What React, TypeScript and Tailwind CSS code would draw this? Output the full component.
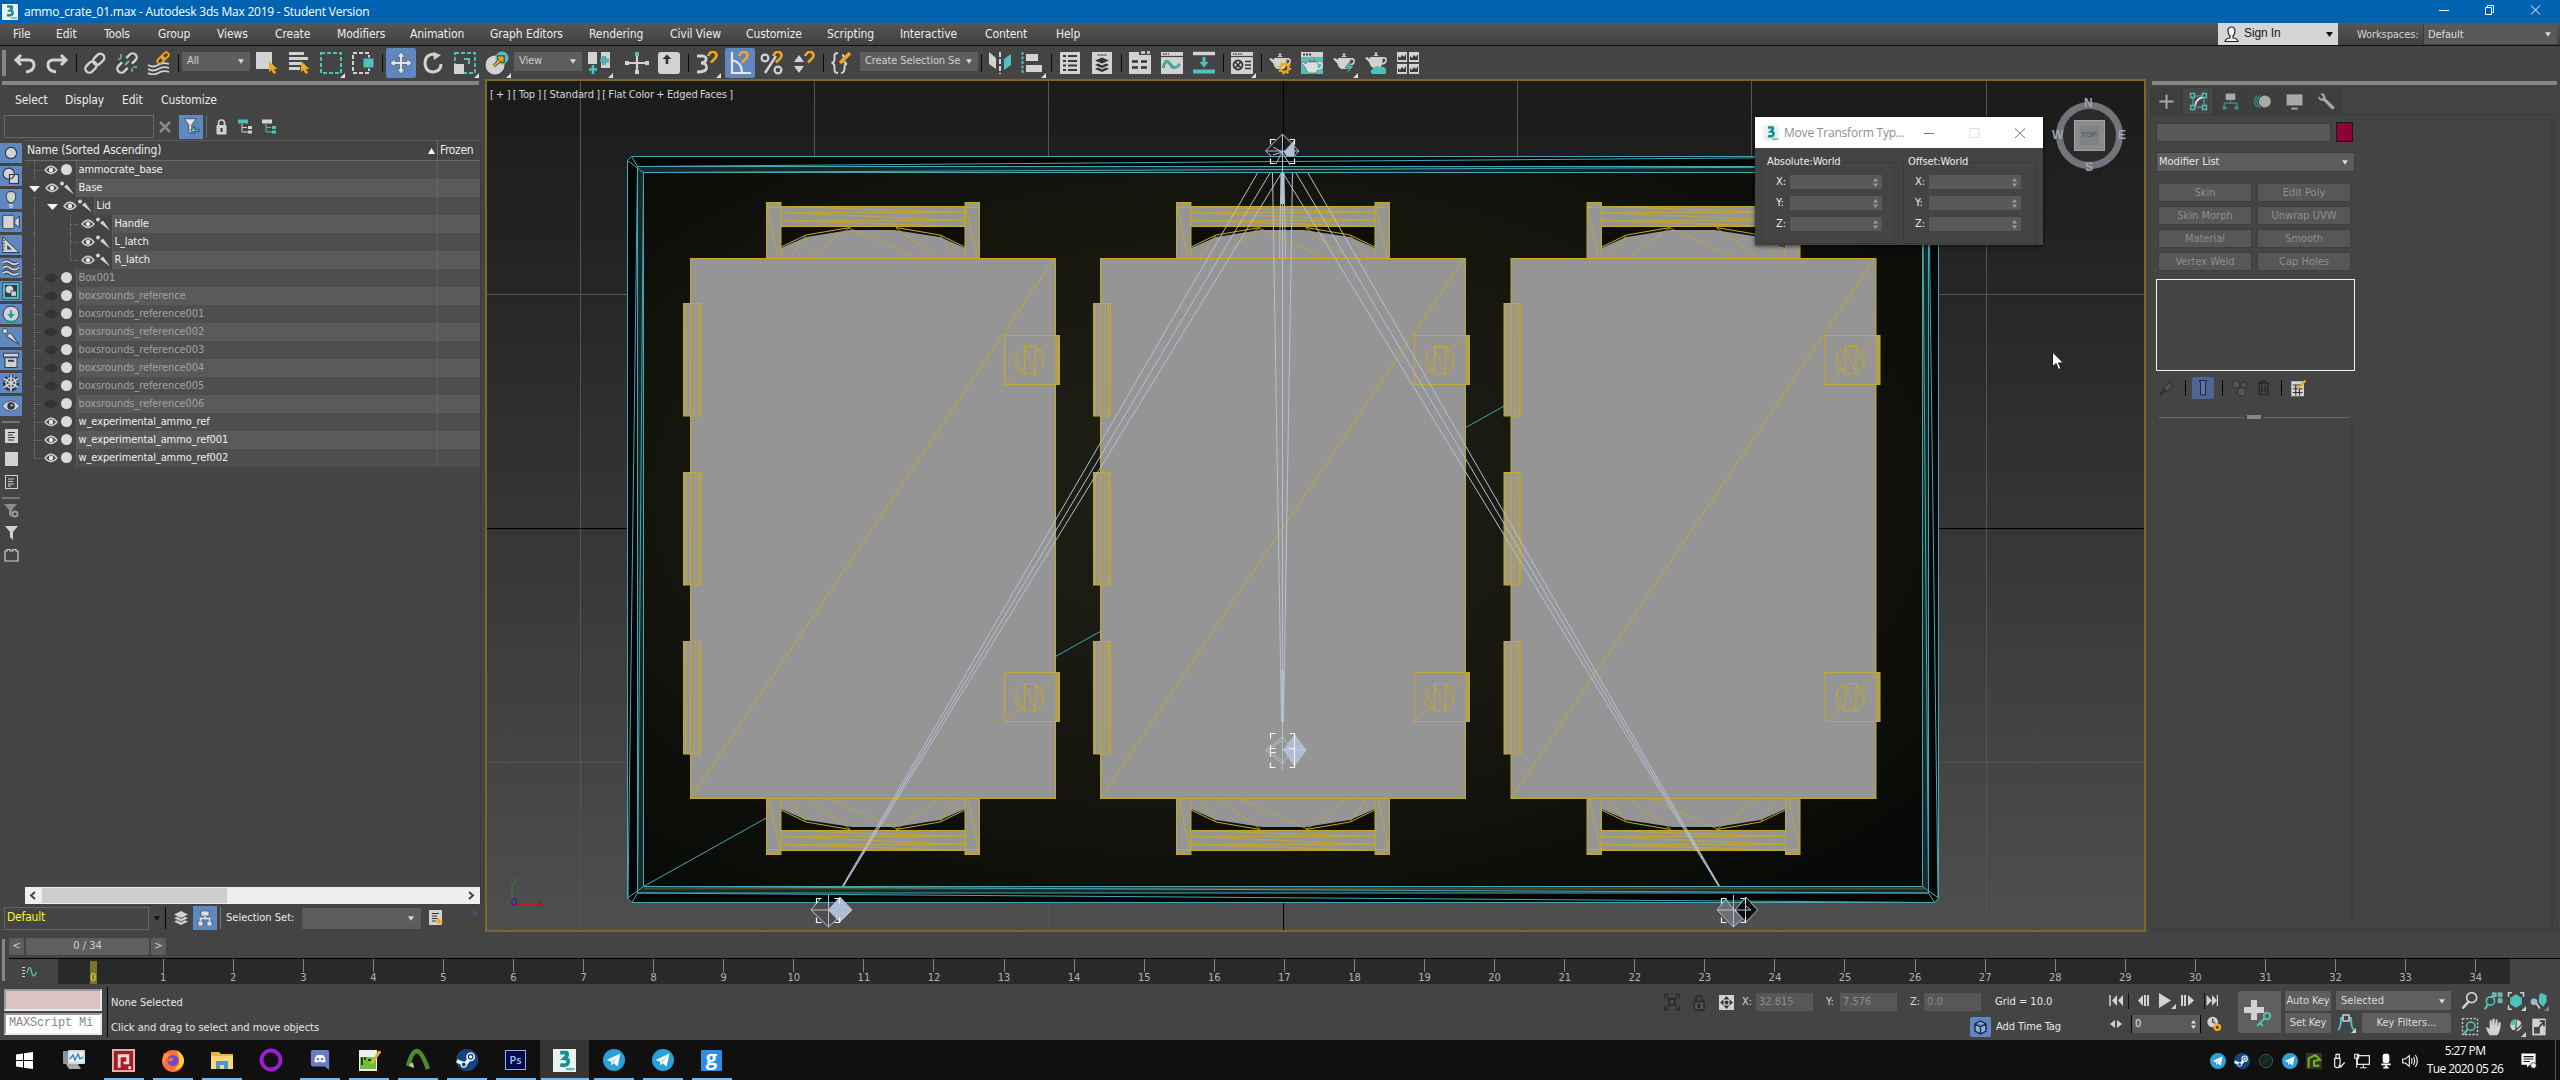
import React from 'react';

const L = '#d2d2d2';
const T = '#4fc0ba';
const O = '#f2a71e';
const Y = '#c3a92e';
const C = '#46a6b6';
const W = '#b6bfd2';

type SvgProps = { s?: number; h?: number; vb?: string; children: React.ReactNode };

function Ic({ s = 24, h, vb = '0 0 24 24', children }: SvgProps) {
  return (
    <svg width={s} height={h ?? s} viewBox={vb} fill="none" className="block shrink-0">
      {children}
    </svg>
  );
}

/* ---------- toolbar ---------- */

function Cell({ children, active = false, fly = false }: { children: React.ReactNode; active?: boolean; fly?: boolean }) {
  return (
    <div className={`relative flex h-[30px] w-8 shrink-0 items-center justify-center rounded-[3px] ${active ? 'bg-[#5f88c0] bg-clip-content px-px' : ''}`}>
      {children}
      {fly && (
        <svg width="5" height="5" viewBox="0 0 5 5" className="absolute right-[2px] bottom-0">
          <path d="M5 0V5H0z" fill="#e0e0e0" />
        </svg>
      )}
    </div>
  );
}

function Sep() {
  return (
    <div className="flex h-[18px] w-[6px] shrink-0 justify-center pl-px">
      <div className="w-px bg-[#0c0c0c]" />
    </div>
  );
}

function Caret({ color = '#d8d8d8', w = 7 }: { color?: string; w?: number }) {
  return (
    <svg width={w} height="5" viewBox="0 0 7 5" className="shrink-0">
      <path d="M0 0H7L3.500 5z" fill={color} />
    </svg>
  );
}

function Drop({ label, className }: { label: string; className: string }) {
  return (
    <div className={`flex h-[19px] shrink-0 items-center justify-between bg-[#5e5e5e] pr-[6px] pl-[5px] text-[11px] text-[#cfcfcf] ${className}`}>
      <span className="tracking-[-0.1px] whitespace-nowrap">{label}</span>
      <Caret w={6} />
    </div>
  );
}

function Dots({ className }: { className: string }) {
  return <div className={`shrink-0 bg-[radial-gradient(#8b8b8b_0.7px,transparent_0.8px)] bg-[length:2px_2px] ${className}`} />;
}

const Magnet = ({ x = 13, y = 1 }: { x?: number; y?: number }) => (
  <path d={`M${x} ${y + 4}q3 -6 7 -3.500q3.500 3 -1 7l-3 3`} stroke={O} strokeWidth="2.600" />
);

const Teapot = ({ dy = 0, fill = L }: { dy?: number; fill?: string }) => (
  <g transform={`translate(0 ${dy})`}>
    <path d="M6 7H18Q20 13 16 18H9Q6 16 5 12L1 8L3 7L6 9z" fill={fill} />
    <path d="M18 8Q23 7 22 11Q21 14 17 14" stroke={fill} strokeWidth="1.700" />
    <path d="M9 6Q12 3 15 6z" fill={fill} />
    <circle cx="12" cy="3.500" r="1.300" fill={fill} />
  </g>
);

const Pointer = ({ x, y }: { x: number; y: number }) => (
  <path d={`M${x} ${y}v11l2.500 -2l2 4l2.500 -1l-2 -4h3.500z`} fill={O} />
);

function Toolbar() {
  return (
    <div className="flex h-[33px] items-center bg-[#444444] pt-px">
      <Dots className="ml-[2px] h-[26px] w-[4px]" />
      <div className="w-[3px]" />
      <Cell><Ic><path d="M8 4L3 9L8 14M3 9H16Q21 9 21 14Q21 20 13 21" stroke={L} strokeWidth="3" /></Ic></Cell>
      <Cell><Ic><path d="M16 4L21 9L16 14M21 9H8Q3 9 3 14Q3 20 11 21" stroke={L} strokeWidth="3" /></Ic></Cell>
      <Sep />
      <Cell>
        <Ic><g transform="rotate(-45 12 12)" stroke={L} strokeWidth="2.400"><rect x="0" y="8" width="12.500" height="8" rx="4" /><rect x="11" y="8" width="12.500" height="8" rx="4" /></g></Ic>
      </Cell>
      <Cell>
        <Ic>
          <g transform="rotate(-45 12 12)" strokeWidth="2.400" stroke={L}><path d="M9 8H4a4 4 0 0 0 0 8H9M15 8H20a4 4 0 0 1 0 8H15" /></g>
          <path d="M6 3V7M3 8H6M17 17V21M18 16H22" stroke={T} strokeWidth="1.600" /><path d="M14 10L10 14" stroke={T} strokeWidth="2" />
        </Ic>
      </Cell>
      <Cell>
        <Ic>
          <path d="M1 14q5 3 10 0t11 -1M1 18q5 3 10 0t11 -1M1 22q5 3 10 0t11 -1" stroke={L} strokeWidth="1.800" />
          <g transform="rotate(-45 16 7)" stroke={O} strokeWidth="1.800"><rect x="9" y="4.500" width="8" height="5" rx="2.500" /><rect x="15" y="4.500" width="8" height="5" rx="2.500" /></g>
        </Ic>
      </Cell>
      <Sep />
      <div className="w-px" />
      <Drop label="All" className="mb-1 w-[68px]" />
      <div className="w-px" />
      <Cell><Ic><rect x="1" y="1" width="16" height="17" fill={L} /><Pointer x={14} y={10} /></Ic></Cell>
      <Cell><Ic><path d="M2 2.500H17M2 7.500H21M2 12.500H15M2 17.500H13" stroke={L} strokeWidth="2.800" /><Pointer x={14} y={10} /></Ic></Cell>
      <Cell fly><Ic><rect x="2" y="2" width="20" height="20" stroke={T} strokeWidth="2" strokeDasharray="4 2" /></Ic></Cell>
      <Cell><Ic><rect x="2" y="2" width="16" height="20" stroke={L} strokeWidth="2" strokeDasharray="4 2" /><rect x="12" y="7" width="11" height="10" fill={T} stroke="#444" /></Ic></Cell>
      <Sep />
      <Cell active>
        <Ic><path d="M12 1L16 6H13.500V10.500H18V8L23 12L18 16V13.500H13.500V18H16L12 23L8 18H10.500V13.500H6V16L1 12L6 8V10.500H10.500V6H8z" fill="#e4e4e4" stroke="#39465a" strokeWidth="0.600" /></Ic>
      </Cell>
      <Cell><Ic><path d="M15 3.500Q4 2 4 13Q5 21 12 21Q20 20 20 13" stroke={L} strokeWidth="3" /><path d="M12 1L20 4L13 9z" fill={L} /></Ic></Cell>
      <Cell fly>
        <Ic><rect x="2" y="2" width="20" height="20" stroke={T} strokeWidth="1.800" strokeDasharray="4 2" /><rect x="1" y="13" width="10" height="10" fill={L} /><path d="M11 8H16V13" stroke={T} strokeWidth="2" /></Ic>
      </Cell>
      <Cell fly><Ic><circle cx="10" cy="14" r="9.500" fill={L} /><circle cx="17" cy="7" r="6.500" fill={T} /><path d="M9 15L17 7M12 6H18V12" stroke="#444" strokeWidth="3.600" /><path d="M9 15L17 7M13 6.500H17.500V11" stroke={O} strokeWidth="2" /></Ic></Cell>
      <div className="w-px" />
      <Drop label="View" className="mb-1 w-[68px]" />
      <div className="w-px" />
      <Cell fly>
        <Ic><rect x="1" y="1" width="9" height="12" fill={L} /><rect x="14" y="1" width="9" height="16" fill={L} /><path d="M6 14V23M2 18.500H10M17 5V14M13 9.500H22" stroke="#3c7f7c" strokeWidth="3.500" /><path d="M6 14V23M2 18.500H10M17 5V14M13 9.500H22" stroke={T} strokeWidth="2" /></Ic>
      </Cell>
      <div className="w-[6px]" />
      <Cell><Ic><path d="M12 5V22M1 12H22" stroke={L} strokeWidth="2.200" /><rect x="10" y="1" width="4" height="4" fill={T} /><rect x="10" y="19" width="4" height="4" fill={L} /><rect x="0" y="10" width="4" height="4" fill={L} /><rect x="20" y="10" width="4" height="4" fill={L} /></Ic></Cell>
      <Cell><Ic><rect x="1" y="1" width="22" height="22" rx="3" fill={L} /><path d="M10 13V7" stroke="#333" strokeWidth="2.600" /><path d="M5.500 8L10 3.500L14.500 8z" fill="#333" /></Ic></Cell>
      <Sep />
      <Cell fly><Ic><path d="M2 5H8Q12 6 11 9Q10 12 6 12Q12 12 11.500 17Q11 21 2 21" stroke={L} strokeWidth="2.800" /><Magnet /></Ic></Cell>
      <div className="w-px" />
      <Cell active><Ic><path d="M4 1V22H23M4 9Q14 11 14 22" stroke="#e8e8e8" strokeWidth="2.200" /><Magnet x={11} /></Ic></Cell>
      <Cell><Ic><circle cx="5" cy="7" r="3.400" stroke={L} strokeWidth="2.200" /><circle cx="18" cy="19" r="3.400" stroke={L} strokeWidth="2.200" /><path d="M5 22L16 5" stroke={L} strokeWidth="2.400" /><Magnet /></Ic></Cell>
      <Cell><Ic><path d="M2 11L7 4L12 11zM2 15H12L7 22z" fill={L} /><Magnet /></Ic></Cell>
      <Sep />
      <Cell><Ic><path d="M8 2Q4 2 4.500 6Q5 12 1.500 12Q5 12 4.500 18Q4 22 8 22M12 4Q15 5 14 9Q14 12 17 13Q14 13 14.500 18Q14 22 11 22" stroke={L} strokeWidth="2" /><path d="M10 12L20 2" stroke={O} strokeWidth="3.500" /></Ic></Cell>
      <div className="w-[2px]" />
      <Drop label="Create Selection Se" className="mb-1 w-[118px]" />
      <Sep />
      <Cell><Ic><path d="M1 1L8 7V18L1 13z" fill={L} /><path d="M12 1V23" stroke={L} strokeWidth="2" strokeDasharray="5 2" /><path d="M23 3L16 8V19L23 14z" fill={T} /></Ic></Cell>
      <Cell fly><Ic><path d="M2.500 1V23" stroke={T} strokeWidth="2" strokeDasharray="3 1.500" /><rect x="6" y="3" width="12" height="7" fill={L} /><rect x="6" y="14" width="16" height="7" fill={L} /></Ic></Cell>
      <Sep />
      <Cell><Ic><rect x="2" y="1" width="20" height="22" fill={L} /><path d="M5 5H8M5 10H8M5 14.500H8M5 19H8M10 5H19M10 10H19M10 14.500H19M10 19H19" stroke="#383838" strokeWidth="2" /></Ic></Cell>
      <Cell><Ic><rect x="2" y="1" width="20" height="22" fill={L} /><path d="M7 4H17" stroke="#777" strokeWidth="1.500" /><path d="M5 9.500L12 6.500L19 9.500L12 12.500zM5 14L8 12.500L12 14.500L16 12.500L19 14L12 17zM5 18L8 16.500L12 18.500L16 16.500L19 18L12 21z" fill="#333" /></Ic></Cell>
      <Sep />
      <Cell><Ic><path d="M1 1H11V4H23V23H1z" fill={L} /><path d="M13 1.500H17M19 1.500H22" stroke={L} strokeWidth="2.500" /><path d="M4 10.500H10M4 16.500H10M13 10.500H19M13 16.500H19" stroke="#333" strokeWidth="2.400" /></Ic></Cell>
      <Cell><Ic><rect x="1" y="1" width="22" height="22" fill={L} /><path d="M1 5.500H23" stroke="#444" strokeWidth="1.200" /><path d="M3 3H9" stroke="#444" strokeWidth="1.500" strokeDasharray="1.500 1" /><path d="M3 17Q6 6 10 13T20 13" stroke="#2c7f7c" strokeWidth="2.600" /><path d="M3 17Q6 6 10 13T20 13" stroke={T} strokeWidth="1.200" /></Ic></Cell>
      <Cell><Ic><path d="M1 2.500H23" stroke={L} strokeWidth="3.500" /><path d="M1 20.500H23" stroke={T} strokeWidth="4" /><path d="M12 6V12" stroke={T} strokeWidth="3" /><path d="M7.500 11H16.500L12 16.500z" fill={T} /></Ic></Cell>
      <Sep />
      <Cell fly><Ic><rect x="1" y="1" width="22" height="22" fill={L} /><path d="M1 5.500H23" stroke="#444" strokeWidth="1.200" /><path d="M3 3H12" stroke="#444" strokeWidth="1.500" strokeDasharray="1.500 1" /><circle cx="8" cy="14" r="4.500" stroke="#333" strokeWidth="1.800" /><path d="M5 11L11 17M11 11L5 17M15 10.500H21M15 14H21M15 17.500H21" stroke="#333" strokeWidth="1.600" /></Ic></Cell>
      <Sep />
      <Cell><Ic><Teapot /><circle cx="16.500" cy="17" r="4" stroke={O} strokeWidth="2.600" /><circle cx="16.500" cy="17" r="5.800" stroke={O} strokeWidth="1.600" strokeDasharray="2 2.500" /></Ic></Cell>
      <Cell><Ic><rect x="1" y="1" width="22" height="22" fill={T} /><rect x="1" y="1" width="22" height="5" fill={L} /><path d="M3 3.500H12" stroke="#444" strokeWidth="1.800" strokeDasharray="2 1" /><g stroke="#2d6562" strokeWidth="0.600"><Teapot dy={4} fill="#dedede" /></g></Ic></Cell>
      <Cell fly><Ic><Teapot /><path d="M19 9L13 17H17L14 23L22 15H18z" fill={T} stroke="#444" strokeWidth="0.600" /></Ic></Cell>
      <Cell><Ic><Teapot dy={-1} /><path d="M8 23Q5 19 9 18Q11 13 16 16Q22 15 22 20Q23 23 20 23z" fill={T} /></Ic></Cell>
      <Cell>
        <Ic>
          {[[1, 1], [13, 1], [1, 13], [13, 13]].map(([x, y]) => (
            <g key={`${x}-${y}`}><rect x={x} y={y} width="10" height="10" fill={L} /><path d={`M${x + 1} ${y + 8}v-4l2 2l2 -3l2 2l2 -3v6z`} fill="#3a3a3a" /></g>
          ))}
        </Ic>
      </Cell>
    </div>
  );
}

/* ---------- title and menu bars ---------- */

function AppMark({ s }: { s: number }) {
  return (
    <Ic s={s} vb="0 0 16 16">
      <rect width="16" height="16" fill="#e6f3f2" />
      <path d="M5 2.500H9.500Q11 4 8 6.500Q12 7 10 10.500Q8 12 5 11" stroke="#168f94" strokeWidth="2.600" />
      <path d="M9 14H15" stroke="#66b7b5" strokeWidth="1.600" />
    </Ic>
  );
}

function TitleBar() {
  return (
    <div className="flex h-[23px] items-center bg-[#0063b1] pl-[2px] font-['Open_Sans','Noto_Sans',sans-serif] text-[12px] text-white">
      <AppMark s={16} />
      <span className="ml-[6px] tracking-[-0.22px] whitespace-nowrap">ammo_crate_01.max - Autodesk 3ds Max 2019 - Student Version</span>
      <svg width="106" height="12" viewBox="0 0 106 12" fill="none" stroke="#fff" className="mr-[16px] mb-[3px] ml-auto">
        <path d="M1 6.500H11" /><path d="M47.500 3.500H53.500V10.500H47.500zM49.500 3.500V1.500H55.500V8.500H53.500" /><path d="M93 1.500L102 10.500M102 1.500L93 10.500" />
      </svg>
    </div>
  );
}

function MenuBar() {
  return (
    <div className="flex h-[23px] items-center border-b border-[#111] bg-linear-to-b from-[#565656] to-[#404040] pl-[13px] text-[12px] tracking-[-0.1px] text-[#ececec]">
      <div className="flex pt-[2px]">
        <span className="w-[43px]">File</span>
        <span className="w-[48px]">Edit</span>
        <span className="w-[54px]">Tools</span>
        <span className="w-[59px]">Group</span>
        <span className="w-[58px]">Views</span>
        <span className="w-[62px]">Create</span>
        <span className="w-[73px]">Modifiers</span>
        <span className="w-[80px]">Animation</span>
        <span className="w-[99px]">Graph Editors</span>
        <span className="w-[81px]">Rendering</span>
        <span className="w-[76px]">Civil View</span>
        <span className="w-[81px]">Customize</span>
        <span className="w-[73px]">Scripting</span>
        <span className="w-[85px]">Interactive</span>
        <span className="w-[71px]">Content</span>
        <span>Help</span>
      </div>
      <div className="ml-auto flex h-[22px] w-[120px] items-center bg-[#d5d5d5] pr-1 pl-[6px] font-['Liberation_Sans',sans-serif] text-[12px] text-[#16161c]">
        <Ic s={15} h={17} vb="0 0 15 17"><path d="M7.500 1Q11 1 11 5Q11 8 9 10V12Q13 12 14 15.500H1Q2 12 6 12V10Q4 8 4 5Q4 1 7.500 1z" fill="#f3f3f3" stroke="#223" strokeWidth="1.200" /></Ic>
        <span className="ml-[5px]">Sign In</span>
        <div className="ml-auto"><Caret color="#111" w={9} /></div>
      </div>
      <span className="ml-[19px] w-[66px] pt-[3px] text-[11px] text-[#d4d4d4]">Workspaces:</span>
      <div className="mr-[3px] flex h-[20px] w-[134px] items-center justify-between border-l border-[#383838] bg-[#595959] pr-[6px] pl-1 text-[11px] text-[#dcdcdc]">
        <span className="pt-[2px]">Default</span> <Caret w={6} />
      </div>
    </div>
  );
}

/* ---------- scene explorer ---------- */

type Node = { name: string; depth: number; kind: 'geo' | 'bone'; hidden?: boolean; open?: boolean };

const nodes: Node[] = [
  { name: 'ammocrate_base', depth: 0, kind: 'geo' },
  { name: 'Base', depth: 0, kind: 'bone', open: true },
  { name: 'Lid', depth: 1, kind: 'bone', open: true },
  { name: 'Handle', depth: 2, kind: 'bone' },
  { name: 'L_latch', depth: 2, kind: 'bone' },
  { name: 'R_latch', depth: 2, kind: 'bone' },
  { name: 'Box001', depth: 0, kind: 'geo', hidden: true },
  { name: 'boxsrounds_reference', depth: 0, kind: 'geo', hidden: true },
  { name: 'boxsrounds_reference001', depth: 0, kind: 'geo', hidden: true },
  { name: 'boxsrounds_reference002', depth: 0, kind: 'geo', hidden: true },
  { name: 'boxsrounds_reference003', depth: 0, kind: 'geo', hidden: true },
  { name: 'boxsrounds_reference004', depth: 0, kind: 'geo', hidden: true },
  { name: 'boxsrounds_reference005', depth: 0, kind: 'geo', hidden: true },
  { name: 'boxsrounds_reference006', depth: 0, kind: 'geo', hidden: true },
  { name: 'w_experimental_ammo_ref', depth: 0, kind: 'geo' },
  { name: 'w_experimental_ammo_ref001', depth: 0, kind: 'geo' },
  { name: 'w_experimental_ammo_ref002', depth: 0, kind: 'geo' },
];

const indent = ['w-[51px]', 'w-[69px]', 'w-[87px]'];

function TreeRow({ n, i }: { n: Node; i: number }) {
  const last = i === nodes.length - 1;
  return (
    <div className="flex h-[18px]">
      <div className={`flex shrink-0 items-center justify-end pr-[4px] ${indent[n.depth]}`}>
        <div className="flex h-full flex-1 justify-start pl-[9px]">
          <div className={`w-0 border-l border-dotted border-[#777] ${last ? 'h-[9px]' : 'h-full'} ${n.open && n.depth === 0 ? 'border-transparent' : ''}`} />
          {n.depth === 2 && <div className={`ml-[35px] w-0 border-l border-dotted border-[#777] ${n.name === 'R_latch' ? 'h-[9px]' : 'h-full'}`} />}
          {!n.open && <div className="mt-[9px] h-0 w-[7px] border-t border-dotted border-[#777]" />}
        </div>
        {n.open && (
          <svg width="11" height="6" viewBox="0 0 11 6" className="mt-px mr-[5px] shrink-0"><path d="M0 0H11L5.500 6z" fill="#f4f4f4" /></svg>
        )}
        <Ic s={14} h={10} vb="0 0 14 10">
          {n.hidden ? (
            <path d="M0 5Q7 -4 14 5Q7 14 0 5z" fill="#333333" />
          ) : (
            <g><path d="M1 5Q7 -2.500 13 5Q7 12 1 5z" stroke="#cfcfcf" strokeWidth="1.300" /><circle cx="7" cy="5" r="2.200" fill="#e6e6e6" /></g>
          )}
        </Ic>
        {n.kind === 'geo' ? (
          <div className="mb-px ml-[3px] size-[11px] shrink-0 rounded-full bg-[#dadada]" />
        ) : (
          <div className="-mr-[2px] ml-px"><Ic s={14} h={14} vb="0 0 14 14"><circle cx="2" cy="2.500" r="2" fill={L} /><path d="M4 6L7 3.500L14 13.500z" fill={L} /></Ic></div>
        )}
      </div>
      <div className={`flex flex-1 items-center border-l border-[#5c5c5c] pt-px pl-[1.500px] tracking-[-0.1px] ${i % 2 ? 'bg-[#5a5a5a]' : 'bg-[#4e4e4e]'} ${n.hidden ? 'text-[#a2a2a2]' : 'text-[#f0f0f0]'}`}>
        {n.name}
      </div>
      <div className={`w-[43px] border-l ${i % 2 ? 'border-[#656565] bg-[#5a5a5a]' : 'border-[#5c5c5c] bg-[#4e4e4e]'}`} />
    </div>
  );
}

function Tile({ children }: { children: React.ReactNode }) {
  return (
    <div className="mb-[3px] flex h-[20px] w-[22px] items-center justify-center bg-[#5f88c0]">
      <Ic s={18}>{children}</Ic>
    </div>
  );
}

const K = '#2e3a4c';

function SideTiles() {
  return (
    <div className="flex w-[25px] shrink-0 flex-col pt-[3px]">
      <Tile><circle cx="12" cy="12" r="7.500" fill={L} stroke={K} strokeWidth="1.500" /></Tile>
      <Tile><circle cx="9" cy="9" r="7.500" fill={L} stroke={K} strokeWidth="1.500" /><rect x="10" y="10" width="12" height="12" fill={L} stroke={K} strokeWidth="1.500" /><path d="M10 16A7.500 7.500 0 0 0 16.500 10" stroke={K} strokeWidth="1.500" /></Tile>
      <Tile><path d="M9 17Q9 15 6 12Q4 2 12 2Q20 2 18 12Q15 15 15 17z" fill={L} stroke={K} strokeWidth="1.300" /><path d="M9 20H15M10 22.500H14" stroke={L} strokeWidth="2" /></Tile>
      <Tile><rect x="1" y="3" width="15" height="18" rx="2" fill={L} stroke={K} strokeWidth="1.300" /><path d="M17 10L23 4V20L17 14z" fill={L} stroke={K} strokeWidth="1.300" /></Tile>
      <Tile><path d="M1 1L23 22H1z" fill={L} stroke={K} strokeWidth="1.300" /><path d="M7 12L13 18H7z" fill={K} /><path d="M2 6H4M2 10H4M2 14H4M2 18H4" stroke={K} /></Tile>
      <Tile>
        <path d="M1 5q5 -4 10 0t11 0M1 12q5 -4 10 0t11 0M1 19q5 -4 10 0t11 0" stroke={K} strokeWidth="5" />
        <path d="M1 5q5 -4 10 0t11 0M1 12q5 -4 10 0t11 0M1 19q5 -4 10 0t11 0" stroke={L} strokeWidth="2.800" />
      </Tile>
      <Tile><rect x="1" y="1" width="22" height="22" stroke={K} strokeWidth="1" fill={T} /><rect x="4" y="4" width="16" height="16" fill={K} /><circle cx="10" cy="10" r="5" fill={L} /><rect x="12" y="12" width="7" height="7" fill={L} stroke={K} /></Tile>
      <Tile><circle cx="12" cy="12" r="10.500" fill={L} stroke={K} strokeWidth="1.300" /><path d="M12 7V14M7 20V22H17V20" stroke="#1f9b95" strokeWidth="2.600" /><path d="M7 12H17L12 18z" fill="#1f9b95" /></Tile>
      <Tile><circle cx="4" cy="4" r="3.500" fill={L} stroke={K} /><path d="M6 11L11 6L23 22z" fill={L} stroke={K} strokeWidth="1.300" /></Tile>
      <Tile><rect x="2" y="3" width="20" height="5" fill={L} stroke={K} strokeWidth="1.300" /><rect x="4" y="9" width="16" height="13" fill={L} stroke={K} strokeWidth="1.300" /><path d="M8 13H16" stroke={K} strokeWidth="2.500" /></Tile>
      <Tile><circle cx="12" cy="12" r="9" stroke={K} strokeWidth="4" strokeDasharray="5 3" /><path d="M12 1V23M2 6L22 18M2 18L22 6" stroke={K} strokeWidth="4.500" /><path d="M12 1V23M2 6L22 18M2 18L22 6" stroke={L} strokeWidth="2.200" /><circle cx="12" cy="12" r="6.500" stroke={L} strokeWidth="1.800" /></Tile>
      <Tile><path d="M0 12Q12 -2 24 12Q12 26 0 12z" fill={L} stroke={K} /><circle cx="12" cy="12" r="5" fill={K} /><circle cx="13" cy="11" r="1.500" fill={L} /></Tile>
      <div className="mt-[2px] mb-[6px] ml-[2px] h-[2px] w-[18px] bg-[#757575]" />
      <div className="flex flex-col items-center gap-[9px] pr-[3px]">
        <Ic s={13} h={14} vb="0 0 13 14"><rect width="13" height="14" fill={L} /><path d="M3 3.500H10M3 6H8M3 8.500H10M3 11H9" stroke="#333" /></Ic>
        <Ic s={13} h={14} vb="0 0 13 14"><rect width="13" height="14" fill={L} /></Ic>
        <Ic s={13} h={14} vb="0 0 13 14"><rect x="0.500" y="0.500" width="12" height="13" stroke={L} /><path d="M3 4H9M3 6.500H8M3 9H9M3 11H6" stroke={L} /></Ic>
      </div>
      <div className="mt-[8px] ml-[2px] h-[2px] w-[18px] bg-[#757575]" />
      <div className="flex flex-col items-center gap-[8px] pt-[4px] pr-[3px]">
        <Ic s={15} h={15} vb="0 0 15 15"><path d="M0 1H13L8 7V14L5 12V7z" fill="#8c8c8c" /><circle cx="11" cy="11" r="2.500" stroke="#999" strokeWidth="2" fill="#444" /></Ic>
        <Ic s={13} h={14} vb="0 0 13 14"><path d="M0 0H13L8 6V14L5 11V6z" fill={L} /></Ic>
        <Ic s={15} h={14} vb="0 0 15 14"><path d="M1 3H3V1.500H6V3H9V1.500H12V3H14V13H1z" stroke={L} strokeWidth="1.200" /></Ic>
      </div>
    </div>
  );
}

function SceneExplorer() {
  return (
    <div className="flex w-[485px] shrink-0 flex-col bg-[#444444] text-[11px] text-[#ececec]">
      <Dots className="mt-[2px] ml-[2px] h-[4px] w-[477px]" />
      <div className="flex h-[28px] items-center pt-1 pl-[15px] text-[12px] tracking-[-0.1px]">
        <span className="w-[50px]">Select</span>
        <span className="w-[57px]">Display</span>
        <span className="w-[39px]">Edit</span>
        <span>Customize</span>
      </div>
      <div className="flex h-[27px] items-center pl-1">
        <div className="h-[23px] w-[150px] border border-[#686868] bg-[#444]" />
        <div className="ml-[5px]"><Ic s={12} vb="0 0 12 12"><path d="M1 1L11 11M11 1L1 11" stroke="#8c8c8c" strokeWidth="2.500" /></Ic></div>
        <div className="ml-2 flex h-[24px] w-[24px] items-center justify-center bg-[#5f88c0]">
          <Ic s={18}><path d="M3 1H19L13 9V21L9 18V9z" fill="#e4e4e4" stroke={K} /><path d="M23 15H17V11L11 16L17 21V18H23z" fill={T} stroke={K} /></Ic>
        </div>
        <div className="ml-[3px] h-[23px] w-px bg-[#6e6e6e]" />
        <div className="ml-[9px]"><Ic s={11} h={16} vb="0 0 11 16"><path d="M2.500 7V4Q2.500 1 5.500 1T8.500 4V7" stroke={L} strokeWidth="1.700" /><rect x="0.500" y="6" width="10" height="9.500" rx="1" fill={L} /><path d="M5.500 9V13" stroke="#333" strokeWidth="2" /></Ic></div>
        <div className="ml-[11px]"><Ic s={14} h={15} vb="0 0 14 15"><path d="M0 2.500H10" stroke={T} strokeWidth="4" /><path d="M4 5V13H10M4 8.500H9" stroke={L} /><path d="M10 8.500H14M10 13H14" stroke={L} strokeWidth="3" /></Ic></div>
        <div className="ml-[10px]"><Ic s={14} h={15} vb="0 0 14 15"><path d="M0 2.500H10" stroke={L} strokeWidth="4" /><path d="M4 5V13H10M4 8.500H9" stroke={T} /><path d="M10 8.500H14M10 13H14" stroke={T} strokeWidth="3" /></Ic></div>
      </div>
      <div className="flex h-[764px] shrink-0">
        <SideTiles />
        <div className="flex w-[456px] flex-col border-t border-r border-t-[#5c5c5c] border-r-[#3a3a3a]">
          <div className="flex h-[20px] items-center border-b border-[#6a6a6a] pl-[2px]">
            <span className="flex-1 pt-px text-[12px] tracking-[-0.2px]">Name (Sorted Ascending)</span>
            <svg width="7" height="6" viewBox="0 0 7 6" className="mr-[2px]"><path d="M0 6H7L3.500 0z" fill="#fff" /></svg>
            <div className="flex h-full w-[43px] items-center border-l border-[#6a6a6a] pt-px pl-[2px] text-[12px] tracking-[-0.35px]">Frozen</div>
          </div>
          <div className="flex flex-1 flex-col">
            {nodes.map((n, i) => <TreeRow key={n.name} n={n} i={i} />)}
          </div>
          <div className="flex h-[17px] items-center bg-[#efefef]">
            <Ic s={17} vb="0 0 17 17"><path d="M10 5L6 8.500L10 12" stroke="#444" strokeWidth="2" /></Ic>
            <div className="h-[15px] w-[185px] bg-[#cdcdcd]" />
            <div className="ml-auto"><Ic s={17} vb="0 0 17 17"><path d="M6 5L10 8.500L6 12" stroke="#444" strokeWidth="2" /></Ic></div>
          </div>
        </div>
      </div>
      <div className="flex h-[28px] items-center pl-1">
        <div className="flex h-[23px] w-[145px] items-center border border-[#666] pb-px pl-[2px] text-[12px] tracking-[-0.2px] text-[#f4f43c]">Default</div>
        <div className="ml-[5px]"><Caret color="#111" w={6} /></div>
        <div className="ml-[5px] h-[22px] w-px bg-black" />
        <div className="ml-[8px]"><Ic s={14} h={14} vb="0 0 14 14"><path d="M0 3.500L7 0L14 3.500L7 7zM0 7L3 5.800L7 8L11 5.800L14 7L7 10.500zM0 10.500L3 9.300L7 11.500L11 9.300L14 10.500L7 14z" fill={L} /></Ic></div>
        <div className="ml-[5px] flex h-[24px] w-[24px] items-center justify-center bg-[#5f88c0]">
          <Ic s={16} vb="0 0 16 16"><path d="M4 1H12V6H4zM1 11H6V16H1zM10 11H15V16H10z" fill="#e0e0e0" stroke={K} strokeWidth="0.600" /><path d="M8 6V8M3.500 11V8.500H12.500V11" stroke="#e0e0e0" strokeWidth="1.500" /></Ic>
        </div>
        <div className="ml-[3px] h-[22px] w-px bg-[#777]" />
        <span className="ml-[5px] w-[76px] whitespace-nowrap">Selection Set:</span>
        <div className="flex h-[21px] w-[119px] items-center justify-end bg-[#5c5c5c] pr-[7px]"><Caret w={6} /></div>
        <div className="ml-2"><Ic s={14} h={16} vb="0 0 14 16"><rect width="13" height="15" fill={L} /><path d="M3 3.500H10M3 6H8M3 8.500H8M3 11H7" stroke="#333" /><path d="M8 7v7l2 -1.500l1.500 3l1 -1l-1 -2.500h2.500z" fill={O} /></Ic></div>
        <span className="mb-[12px] ml-[28px] text-[13px] leading-none text-[#5a568c]">»</span>
      </div>
    </div>
  );
}

/* ---------- viewport scene ---------- */

function HandleShape() {
  return (
    <g>
      <path d="M781 226H965V258H781z" fill="#0e0e07" stroke="none" />
      <path d="M781 248L806 237L850 230H894L940 237L965 248V258H781z" fill="#959595" stroke="none" />
      <path d="M781 247L806 235L850 227.500M896 227.500L940 235L965 247" />
      <path d="M806 235L790 258M849 228L808 258M849 228L916 258M896 228L938 258M940 235L957 258" opacity="0.8" />
      <rect x="766.500" y="202.500" width="14.500" height="56" fill="#959595" />
      <rect x="965" y="202.500" width="14.500" height="56" fill="#959595" />
      <path d="M766.500 207.500H781M965 207.500H979.500M767 207L778 258M965.500 207L977.500 258M767 207L781 203M965 207L979 203" />
      <rect x="781" y="206.500" width="184" height="20" fill="#959595" />
      <path d="M781 212.500H965M781 220.500H965M781 206.500L965 212.500M781 212.500L965 220.500M781 220.500L965 226.500" opacity="0.9" />
    </g>
  );
}

function Latch({ y }: { y: number }) {
  return (
    <g transform={`translate(1004.500 ${y})`}>
      <rect x="0" y="0" width="55" height="49" fill="#959595" />
      <path d="M0 49L18 33M37 14L52 2" opacity="0.8" />
      <path d="M51.500 0V49" />
      <rect x="52.500" y="1" width="2" height="47" fill={Y} stroke="none" opacity="0.7" />
      <path d="M20 11H31L39 19V30L32 38.500H20L11.500 31V19zM20 11V38.500M31 11V38.500M20 12L31 38M11.500 19L20 38M31 12L39 30" opacity="0.9" />
    </g>
  );
}

function AmmoBox({ dx }: { dx: number }) {
  return (
    <g transform={`translate(${dx} 0)`} stroke={Y} strokeWidth="1" fill="none">
      <HandleShape />
      <g transform="rotate(180 873 528.500)"><HandleShape /></g>
      <rect x="690.500" y="258.500" width="365" height="540" fill="#959595" />
      <path d="M690.500 798.500L1054 259" />
      {[303.5, 472.5, 641.5].map((y) => (
        <g key={y}>
          <rect x="683.500" y={y} width="17" height="112.500" fill="#9a988c" />
          <path d={`M690.500 ${y}v112M698.500 ${y}v112M685.500 ${y}v112`} />
          <path d={`M695.500 ${y}l-1.500 112`} opacity="0.7" />
        </g>
      ))}
      <Latch y={335.500} />
      <Latch y={672.500} />
    </g>
  );
}

function Brackets({ x, y, w = 24, h = 24 }: { x: number; y: number; w?: number; h?: number }) {
  return (
    <path
      d={`M${x} ${y + 5}V${y}h5M${x + w - 5} ${y}h5v5M${x + w} ${y + h - 5}v5h-5M${x + 5} ${y + h}h-5v-5`}
      stroke="#f6f6f6"
      strokeWidth="1.200"
      fill="none"
    />
  );
}

function Scene() {
  return (
    <svg width="1657" height="849" viewBox="487 81 1657 849" fill="none" className="block">
      <defs>
        <linearGradient id="bg" x1="0" y1="0" x2="0" y2="1"><stop offset="0" stopColor="#1b1b1b" /><stop offset="0.15" stopColor="#212121" /><stop offset="1" stopColor="#4f4f4f" /></linearGradient>
        <radialGradient id="floor" cx="0.45" cy="0.45" r="0.7"><stop offset="0" stopColor="#1f2015" /><stop offset="0.6" stopColor="#15150e" /><stop offset="1" stopColor="#080a07" /></radialGradient>
      </defs>
      <rect x="487" y="81" width="1657" height="850" fill="url(#bg)" />
      <path d="M580.500 81V931M814.500 81V931M1048.500 81V931M1517.500 81V931M1751.500 81V931M1986.500 81V931M487 294.500H2144M487 762.500H2144" stroke="#555555" />
      <path d="M1283.500 81V931M487 528.500H2144" stroke="#000" />

      <path d="M631.500 156.500H1934.500L1938.500 161V898L1934.500 902.500H632L627.500 898V160.500z" fill="#050606" stroke={C} />
      <rect x="637.500" y="166.500" width="1291" height="726.500" fill="#182a28" stroke={C} />
      <rect x="643.500" y="172.500" width="1279" height="714" fill="url(#floor)" stroke={C} />
      <path d="M644 888.500H1924" stroke="#4b4a2c" strokeWidth="2" />
      <path
        d="M627.500 160.500L643.500 172.500M631.500 156.500L637.500 166.500M627.500 898L643.500 886.500M632 902.500L637.500 893M1938.500 898L1922.500 886.500M1934.500 902.500L1928.500 893M1938.500 161L1922.500 172.500M637.500 166.500L1934 156.500M643.500 172.500L1928.500 166.500M637.500 166.500L628 898M643.500 172.500L637.500 893M643.500 886.500L1928.500 893M637.500 893L1934 902.500M1922.500 172.500L1928.500 893M1928.500 166.500L1938 898M643.500 886.500L1922.500 172.500"
        stroke={C}
      />

      <AmmoBox dx={0} />
      <AmmoBox dx={410} />
      <AmmoBox dx={820.5} />

      <path d="M1257.500 173L842.500 886M1270 173L843 886M1281.500 173L843.500 886M1283 173L1718.500 886M1296 173L1719 886M1308 173L1719.500 886" stroke={W} />
      <path d="M1272.500 173L1281.500 722M1292.500 173L1283.500 722M1282.500 173V770M1281 173L1279.500 258M1284 173L1285.500 258" stroke={W} />
      <path d="M1282.500 173V204" stroke={W} strokeWidth="3" />
      <path d="M1282.500 670V722" stroke={W} strokeWidth="2.500" />

      <g stroke={W}>
        <path d="M1282.500 134L1299 151L1294 156M1282.500 134L1265.500 151L1271 156M1265.500 151H1299M1282.500 134V173M1273 147L1282 152L1273 155M1276 164L1282 152L1290 165" />
        <path d="M1284 152L1294 141V156H1287z" fill={W} />
        <Brackets x={1270.5} y={139.5} />
        <path d="M1265.500 750L1282.500 737L1292 750L1282.500 764zM1268 750L1282.500 740M1268 750L1282.500 761M1282.500 736V764" />
        <path d="M1283.500 750L1294.500 735L1306 750L1294.500 766z" fill="#aebcd4" />
        <path d="M1284 750H1305" stroke="#c4d2e6" />
        <path d="M1270.500 748.500H1276M1270.500 752.500H1276M1270.500 745V757M1289 748.500H1295M1294.500 734V766" stroke="#f2f2f2" />
        <Brackets x={1270.5} y={733.5} h={34} />
        <path d="M828.500 895V927M811 910H828M811 910L828.500 927L838 918M811 910L820 899" />
        <path d="M828.500 910L840 897L852 910L840 922z" fill="#aebcd4" />
        <Brackets x={816.5} y={898.5} w={23} />
        <path d="M1717 910L1733.500 927L1744 917L1733.500 910L1726 899z" fill="#6a6f78" />
        <path d="M1735 910L1746 897L1757.500 910L1746 922z" fill="#0b0b0b" />
        <path d="M1717 910H1751L1746 906M1733.500 895V927M1745.500 898V922" />
        <Brackets x={1721.5} y={898.5} />
      </g>

      <path d="M512 904.500V884M512 886L518 878" stroke="#2c8a2c" />
      <path d="M512 904.500H541" stroke="#c01818" />
      <rect x="512" y="899" width="4" height="6" stroke="#1a1ab0" />
      <path d="M537 900L542 906M542 900L537 906" stroke="#8a2020" />
    </svg>
  );
}

function ViewCube() {
  return (
    <div className="absolute top-[16px] left-[1565px] flex h-[76px] w-[74px] items-center justify-center font-['Liberation_Sans',sans-serif] text-[12px] leading-none font-bold text-[#a0a4aa]">
      <div className="absolute size-[67px] rounded-full border-[7px] border-[#70747b] bg-[#2a2a2a]" />
      <div className="relative flex h-[31px] w-[31px] items-center justify-center border border-[#a2a2a2] bg-[#8b8b8b]">
        <div className="flex h-[19px] w-[19px] items-center justify-center bg-[#7e8187] text-[8px] tracking-[-0.3px] text-[#5c5f64]">TOP</div>
      </div>
      <span className="absolute top-0 left-[32px]">N</span>
      <span className="absolute bottom-0 left-[33px]">S</span>
      <span className="absolute top-[32px] left-0">W</span>
      <span className="absolute top-[32px] right-0">E</span>
    </div>
  );
}

function SpinField({ label }: { label: string }) {
  return (
    <div className="flex h-[14px] items-center">
      <span className="w-[14px]">{label}</span>
      <div className="flex h-[14px] w-[92px] items-center justify-end bg-[#595959] pr-1">
        <Ic s={5} h={9} vb="0 0 5 9"><path d="M0 3.500L2.500 0L5 3.500zM0 5.500H5L2.500 9z" fill="#9a9a9a" /></Ic>
      </div>
    </div>
  );
}

function GroupBox({ title, wide = false }: { title: string; wide?: boolean }) {
  return (
    <div className="flex w-[134px] flex-col">
      <fieldset className={`flex h-[90px] flex-col gap-[7px] rounded-[2px] border border-[#3a3a3a] pt-[5px] ${wide ? 'pl-[14px]' : 'pl-[11px]'}`}>
        <legend className={`px-[1px] leading-[16px] whitespace-nowrap ${wide ? '-ml-[10px]' : '-ml-[8px]'}`}>{title}</legend>
        <SpinField label="X:" />
        <SpinField label="Y:" />
        <SpinField label="Z:" />
      </fieldset>
    </div>
  );
}

function MoveDialog() {
  return (
    <div className="absolute top-[36px] left-[1268px] flex h-[128px] w-[288px] flex-col bg-[#444444] text-[11px] tracking-[-0.1px] text-[#ececec] shadow-[0_1px_4px_rgba(0,0,0,0.7)]">
      <div className="flex h-[31px] items-center bg-white pl-[8px] font-['Open_Sans','Noto_Sans',sans-serif] text-[12px] text-[#8e8e8e]">
        <AppMark s={16} />
        <span className="ml-[5px] w-[137px] tracking-[-0.2px] whitespace-nowrap">Move Transform Typ...</span>
        <svg width="108" height="12" viewBox="0 0 108 12" fill="none" className="ml-[3px]">
          <path d="M0 6.500H10" stroke="#777" /><rect x="46" y="1.500" width="9" height="9" stroke="#dedede" /><path d="M91 1.500L101 11M101 1.500L91 11" stroke="#777" />
        </svg>
      </div>
      <div className="flex gap-[8px] pt-[6px] pl-[6px]">
        <GroupBox title="Absolute:World" wide />
        <GroupBox title="Offset:World" />
      </div>
    </div>
  );
}

function Viewport() {
  return (
    <div className="relative h-[853px] w-[1661px] shrink-0 overflow-hidden border-2 border-[#7c682a]">
      <Scene />
      <div className="absolute top-[7px] left-[3px] text-[11px] tracking-[-0.1px] whitespace-nowrap text-[#d6d6d6] [word-spacing:-0.7px]">
        [ + ] [ Top ] [ Standard ] [ Flat Color + Edged Faces ]
      </div>
      <MoveDialog />
      <ViewCube />
      <svg width="13" height="20" viewBox="0 0 13 20" className="absolute top-[270px] left-[1565px]">
        <path d="M0.500 1V16L4 12.500L6.500 18.500L9 17.500L6.500 12H11.500z" fill="#fff" stroke="#111" />
      </svg>
    </div>
  );
}

/* ---------- command panel ---------- */

function Tab({ children, on = false }: { children: React.ReactNode; on?: boolean }) {
  return (
    <div className={`flex h-[27px] w-[32px] items-center justify-center rounded-t border-x border-t ${on ? 'border-[#393939] bg-[#474747]' : 'border-[#3c3c3c] bg-[#3e3e3e]'}`}>
      <Ic s={19}>{children}</Ic>
    </div>
  );
}

const modifierButtons = ['Skin', 'Edit Poly', 'Skin Morph', 'Unwrap UVW', 'Material', 'Smooth', 'Vertex Weld', 'Cap Holes'];

function CommandPanel() {
  return (
    <div className="flex flex-1 flex-col bg-[#444444] pl-1 text-[11px]">
      <Dots className="mt-[2px] ml-[2px] h-[4px] w-[405px]" />
      <div className="mt-[2px] flex">
        <Tab><path d="M12 3V21M3 12H21" stroke="#a9a9a9" strokeWidth="2.500" /></Tab>
        <Tab on><path d="M5 5H19V19H5z" stroke={T} strokeWidth="1.200" /><path d="M2 2H7V7H2zM17 2H22V7H17zM2 17H7V22H2zM17 17H22V22H17z" fill="#444" stroke={T} strokeWidth="1.800" /><path d="M8 17Q9 8 17 7" stroke="#e2e2e2" strokeWidth="2.200" /></Tab>
        <Tab><rect x="6" y="2" width="12" height="8" fill="#a9a9a9" /><path d="M12 10V14M4 20V14H20V20" stroke="#3b918d" strokeWidth="1.500" /><rect x="2" y="18" width="5" height="4" fill="#3b918d" /><rect x="17" y="18" width="5" height="4" fill="#3b918d" /></Tab>
        <Tab><circle cx="15" cy="12" r="7.500" fill="#a9a9a9" /><path d="M9 4Q1 12 9 20M5 5Q-1 12 5 19" stroke="#3b918d" strokeWidth="1.500" /></Tab>
        <Tab><rect x="2" y="3" width="20" height="14" fill="#a9a9a9" /><path d="M8 21H16" stroke="#a9a9a9" strokeWidth="2.500" /></Tab>
        <Tab><path d="M8 8L21 21" stroke="#a9a9a9" strokeWidth="4" /><path d="M4 2L8 6L6 9L2 5Q1 12 9 11Q13 6 8 2z" fill="#a9a9a9" /></Tab>
      </div>
      <div className="flex h-[816px] w-[408px] border border-[#3b3b3b]">
        <div className="flex w-[204px] flex-col">
          <div className="mt-[7px] ml-[5px] flex items-center">
            <div className="h-[19px] w-[175px] border border-[#3c3c3c] bg-[#585858]" />
            <div className="ml-[5px] h-[20px] w-[17px] border border-[#1c1c1c] bg-[#8e0038]" />
          </div>
          <div className="mt-[10px] ml-[5px] flex h-[20px] w-[199px] items-center justify-between border border-[#3c3c3c] bg-[#5c5c5c] pr-[6px] pl-[2px] text-[#e6e6e6]">
            <span className="pt-px">Modifier List</span> <Caret w={6} />
          </div>
          <div className="mt-[11px] ml-[7px] grid w-[193px] grid-cols-2 gap-x-[5px] gap-y-[4px]">
            {modifierButtons.map((b) => (
              <div key={b} className="flex h-[19px] items-center justify-center rounded-[2px] border border-[#3f3f3f] bg-[#575757] pt-px text-[11px] text-[#8f8f8f]">{b}</div>
            ))}
          </div>
          <div className="mt-[8px] ml-[5px] h-[92px] w-[199px] border-[1.500px] border-[#f2f2f2]" />
          <div className="mt-[5px] flex h-[23px] items-center pl-[7px]">
            <Ic s={18}><path d="M14 3L21 10L17 11L14 14L13 17L7 11L10 10L13 7z" fill="#555" stroke="#222" /><path d="M10 14L3 21" stroke="#222" strokeWidth="1.600" /></Ic>
            <div className="ml-[9px] h-[16px] w-px bg-black" />
            <div className="ml-[6px] flex h-[22px] w-[22px] items-center justify-center rounded-[2px] bg-[#4e6691]">
              <Ic s={8} h={16} vb="0 0 8 16"><path d="M0.500 0.500H7.500V2H6.500V15H1.500V2H0.500z" fill="#5c77a4" stroke="#1d2635" /></Ic>
            </div>
            <div className="ml-[8px] h-[16px] w-px bg-black" />
            <div className="ml-[8px]"><Ic s={18}><circle cx="7" cy="7" r="5" fill="#555" stroke="#262626" /><circle cx="17" cy="8" r="4" fill="#555" stroke="#262626" /><circle cx="14" cy="17" r="5.500" fill="#555" stroke="#262626" /></Ic></div>
            <div className="ml-[6px]"><Ic s={17}><path d="M4 6H20M9 6V3H15V6M6 6V22H18V6M9.500 9V19M14.500 9V19" stroke="#262626" strokeWidth="1.800" fill="none" /></Ic></div>
            <div className="ml-[9px] h-[16px] w-px bg-black" />
            <div className="ml-[7px]"><Ic s={18}><rect x="3" y="3" width="17" height="20" fill={L} /><path d="M5 8H18M5 13H18M5 18H18M9 8V22M14 12V22" stroke="#333" strokeWidth="1.500" /><path d="M12 13L22 2" stroke={O} strokeWidth="3" /></Ic></div>
          </div>
          <div className="mt-[16px] flex items-center pl-[8px]">
            <div className="h-px w-[85px] bg-[#6a6a6a]" />
            <Dots className="mx-[3px] h-[4px] w-[14px]" />
            <div className="h-px w-[85px] bg-[#6a6a6a]" />
          </div>
          <div className="mt-[5px] mr-px ml-auto h-[500px] w-[4px] rounded-sm bg-[#3f3f3f]" />
        </div>
        <div className="mt-[2px] mr-[2px] mb-[2px] ml-auto w-[5px] rounded-sm bg-[#3f3f3f]" />
      </div>
    </div>
  );
}

/* ---------- time slider and status ---------- */

function TimeSlider() {
  return (
    <div className="flex h-[52px] bg-[#444444]">
      <Dots className="mt-[7px] ml-[2px] h-[42px] w-[3px]" />
      <div className="flex flex-1 flex-col">
        <div className="flex h-[26px] items-center pt-[3px] pl-[4px] text-[11px] text-[#d0d0d0]">
          <div className="flex h-[17px] w-[15px] items-center justify-center rounded-[2px] bg-[#5c5c5c]">&lt;</div>
          <div className="ml-[2px] flex h-[17px] w-[123px] items-center justify-center rounded-[2px] bg-[#5f5f5f]">0 / 34</div>
          <div className="ml-[2px] flex h-[17px] w-[15px] items-center justify-center rounded-[2px] bg-[#5c5c5c]">&gt;</div>
        </div>
        <div className="ml-[4px] flex h-[26px] border-t border-black">
          <div className="flex w-[49px] items-center justify-center pr-[8px]">
            <Ic s={15} h={12} vb="0 0 15 12"><path d="M0 1.500H3M0 4.500H3M0 7.500H3M0 10.500H3" stroke={L} /><path d="M5 7Q7.500 -3 9.500 5.500T14.500 6" stroke={T} strokeWidth="1.300" /></Ic>
          </div>
          <div className="flex h-[25px] w-[2452px] bg-[#292929]">
            {Array.from({ length: 35 }, (_, i) => (
              <div key={i} className="relative flex h-full w-[70.080px] shrink-0 flex-col items-center justify-between text-[11px] leading-none text-[#b4b4b4]">
                <div className={`h-[13px] w-px ${i === 0 ? 'bg-transparent' : 'bg-[#858585]'}`} />
                {i === 0 ? (
                  <div className="absolute top-[2px] flex h-[23px] w-[7px] items-end justify-center bg-[#7d7424] pb-px text-[#e5dc55]">0</div>
                ) : (
                  <span className="pb-px">{i}</span>
                )}
              </div>
            ))}
          </div>
        </div>
      </div>
    </div>
  );
}

function Coord({ label, value, className }: { label: string; value: string; className: string }) {
  return (
    <div className={`flex shrink-0 items-center text-[#d8d8d8] ${className}`}>
      <span className="w-[14px]">{label}</span>
      <div className="flex h-[18px] w-[57px] items-center bg-[#575757] pl-[3px] text-[#8c8c8c]">{value}</div>
    </div>
  );
}

function StatusBar() {
  return (
    <div className="flex h-[56px] bg-[#444444] text-[11px] text-[#e8e8e8]">
      <div className="flex flex-col gap-[2px] pt-[5px] pl-[4px]">
        <div className="h-[22px] w-[98px] border-2 border-[#e9e9e9] border-t-[#999] border-l-[#999] bg-[#dcc3c3]" />
        <div className="flex h-[22px] w-[98px] items-center border-2 border-[#e9e9e9] border-t-[#999] border-l-[#999] bg-white pl-[3px] font-['Liberation_Mono',monospace] text-[12px] tracking-[-0.2px] whitespace-nowrap text-[#8a8a8a]">MAXScript Mi</div>
      </div>
      <div className="mt-[3px] ml-[5px] h-[50px] w-px bg-black" />
      <div className="ml-[3px] flex w-[1552px] flex-col pt-[12px]">
        <span className="h-[25px] leading-[14px]">None Selected</span>
        <span className="leading-[14px]">Click and drag to select and move objects</span>
      </div>
      <div className="flex w-[445px] flex-col pt-[8px]">
        <div className="flex h-[20px] items-center whitespace-nowrap">
          <Ic s={18}><path d="M2 7V2H7M17 2H22V7M22 17V22H17M7 22H2V17M8 8H16V16H8zM5 5L8 8M19 5L16 8M19 19L16 16M5 19L8 16" stroke="#262626" strokeWidth="1.800" /></Ic>
          <div className="ml-[12px]"><Ic s={12} h={17} vb="0 0 12 17"><path d="M3 8V4.500Q3 1.500 6 1.500T9 4.500V8" stroke="#262626" strokeWidth="1.300" /><rect x="1" y="7.500" width="10" height="8.500" rx="1" stroke="#262626" strokeWidth="1.300" fill="#505050" /><path d="M6 10V14" stroke="#222" strokeWidth="2" /></Ic></div>
          <div className="ml-[14px]"><Ic s={15} vb="0 0 15 15"><rect width="15" height="15" fill={L} /><path d="M7.500 1L10.500 4.500H4.500zM7.500 14L10.500 10.500H4.500zM1 7.500L4.500 4.500V10.500zM14 7.500L10.500 4.500V10.500z" fill="#333" /><circle cx="7.500" cy="7.500" r="2" fill="#333" /></Ic></div>
          <Coord label="X:" value="32.815" className="ml-[8px]" />
          <Coord label="Y:" value="7.576" className="ml-[13px]" />
          <Coord label="Z:" value="0.0" className="ml-[13px]" />
          <span className="ml-[14px]">Grid = 10.0</span>
        </div>
        <div className="mt-[5px] flex h-[20px] items-center pl-[307px] whitespace-nowrap">
          <div className="flex h-[20px] w-[21px] items-center justify-center rounded-[2px] bg-[#5f88c0]">
            <Ic s={15} vb="0 0 15 15"><path d="M7.500 1L13 4V11L7.500 14L2 11V4zM2 4L7.500 7L13 4M7.500 7V14" stroke="#1c2738" strokeWidth="1.400" fill="#8fb0dc" /></Ic>
          </div>
          <span className="ml-[5px] pt-px tracking-[-0.1px]">Add Time Tag</span>
        </div>
      </div>
      <div className="flex flex-col pt-[7px]">
        <div className="flex h-[20px] items-center">
          <svg width="110" height="18" viewBox="2108 0 110 18" className="shrink-0">
            <path d="M2110 3V14M2112 8.500L2117 3V14zM2118 8.500L2123 3V14zM2138 8.500L2143 3V14zM2144 3H2146V14H2144zM2147 3H2149V14H2147zM2159 1L2171 8.500L2159 16zM2181 3H2183V14H2181zM2184 3H2186V14H2184zM2188 3L2194 8.500L2188 14zM2206.500 3L2212 8.500L2206.500 14zM2212 3L2217 8.500L2212 14z" fill={L} />
            <path d="M2110 3V14M2217.500 3V14" stroke={L} strokeWidth="1.500" />
            <path d="M2128.500 1V17M2204.500 1V17" stroke="#111" />
            <path d="M2176 12V17H2171z" fill={L} />
          </svg>
        </div>
        <div className="mt-[3px] flex h-[20px] items-center">
          <svg width="20" height="14" viewBox="0 0 20 14"><path d="M2 7L7 3V11zM14 7L9 3V11z" fill={L} /></svg>
          <div className="ml-[3px] flex h-[18px] w-[70px] items-center justify-between border-x border-black bg-[#5a5a5a] pr-1 pl-[3px]">
            <span>0</span>
            <Ic s={5} h={9} vb="0 0 5 9"><path d="M0 3.500L2.500 0L5 3.500zM0 5.500H5L2.500 9z" fill="#e0e0e0" /></Ic>
          </div>
          <div className="ml-[5px]"><Ic s={16}><circle cx="10" cy="9" r="8" fill={L} /><path d="M10 4V9L14 11" stroke="#333" strokeWidth="1.800" /><circle cx="17" cy="17" r="4" stroke={O} strokeWidth="3.500" /></Ic></div>
        </div>
      </div>
      <div className="mt-[7px] ml-[16px] flex h-[42px] w-[43px] shrink-0 items-center justify-center rounded-[2px] bg-[#5f5f5f] pr-[3px]">
        <Ic s={32} vb="0 0 32 32"><path d="M12 4V24M2 14H22" stroke={L} strokeWidth="6" /><circle cx="25" cy="20" r="3.200" stroke={T} strokeWidth="2" /><path d="M23 22L15 30M18 27L21 30" stroke={T} strokeWidth="2" /></Ic>
      </div>
      <div className="mt-[7px] ml-[4px] flex w-[46px] flex-col gap-[2px] tracking-[-0.1px] text-[#dcdcdc]">
        <div className="flex h-[20px] items-center justify-center rounded-[2px] bg-[#5f5f5f] pt-px whitespace-nowrap">Auto Key</div>
        <div className="flex h-[20px] items-center justify-center rounded-[2px] bg-[#5f5f5f] pt-px whitespace-nowrap">Set Key</div>
      </div>
      <div className="mt-[7px] ml-[5px] flex w-[115px] flex-col gap-[3px] text-[#dcdcdc]">
        <div className="flex h-[19px] items-center justify-between bg-[#5f5f5f] pt-px pr-[6px] pl-[5px]">Selected <Caret w={6} /></div>
        <div className="flex items-center justify-between">
          <Ic s={20} vb="0 0 20 20"><path d="M2 17Q5 15 5 5H15Q15 15 18 17" stroke={T} strokeWidth="2" /><rect x="7" y="2" width="6" height="6" fill="#444" stroke={L} strokeWidth="1.500" /><path d="M20 15V20H15z" fill={L} /></Ic>
          <div className="flex h-[20px] w-[89px] items-center justify-center rounded-[2px] bg-[#5f5f5f] pt-px">Key Filters...</div>
        </div>
      </div>
      <div className="mt-[7px] ml-[9px] grid grid-cols-4 gap-x-[3px] gap-y-[3px]">
        <Ic s={20}><circle cx="14" cy="8" r="6" stroke={L} strokeWidth="2" /><path d="M10 13L3 21" stroke={L} strokeWidth="3" /></Ic>
        <Ic s={20}><circle cx="9" cy="12" r="5" stroke={T} strokeWidth="2" /><path d="M6 16L2 22" stroke={T} strokeWidth="2.500" /><path d="M11 2H16V7H11zM18 2H23V7H18zM18 9H23V14H18z" fill={T} stroke={L} strokeWidth="0.500" /></Ic>
        <Ic s={20}><path d="M3 7V2H7M17 2H21V7M7 22H3V17" stroke={L} strokeWidth="1.800" /><path d="M12 4L19 8V16L12 20L5 16V8z" fill={T} /><path d="M24 18V24H18z" fill={L} /></Ic>
        <Ic s={20}><path d="M14 2L21 5V13L17 19L12 14V5z" fill={T} /><circle cx="6" cy="13" r="4" fill="#9bc" /><path d="M9 15L13 21" stroke={L} strokeWidth="2" /><path d="M24 18V24H18z" fill="#888" /></Ic>
        <Ic s={20}><rect x="3" y="2" width="18" height="19" stroke={L} strokeWidth="1.600" strokeDasharray="2.500 2" /><circle cx="13" cy="11" r="5" stroke={T} strokeWidth="2" /><path d="M9 15L4 21" stroke={T} strokeWidth="2.500" /></Ic>
        <Ic s={20}><path d="M8 22Q3 14 4 12L8 14V4H10.500V11L11.500 2H14V11L15.500 3H17.500V12L19 6H21Q22 16 17 22z" fill={L} /></Ic>
        <Ic s={20}><circle cx="12" cy="10" r="7" fill={L} /><path d="M4 16Q12 20 22 4M12 3V17" stroke="#444" strokeWidth="1.500" /><path d="M5 10Q6 3 12 3V10z" fill={T} /><path d="M24 18V24H18z" fill={L} /></Ic>
        <Ic s={20}><rect x="4" y="2" width="16" height="20" fill={L} /><rect x="6" y="12" width="7" height="8" fill="#444" /><path d="M12 12L18 6M13 5H18V11" stroke="#333" strokeWidth="2" /></Ic>
      </div>
    </div>
  );
}

/* ---------- taskbar ---------- */

function Task({ children, run = false, on = false }: { children: React.ReactNode; run?: boolean; on?: boolean }) {
  return (
    <div className={`flex h-[40px] w-[49px] shrink-0 flex-col items-center ${on ? 'bg-[#353535]' : ''}`}>
      <div className="flex flex-1 items-center pt-[2px]">{children}</div>
      <div className={`h-[2px] ${on ? 'w-[48px]' : 'w-[40px]'} ${run || on ? 'bg-[#76b9ed]' : ''}`} />
    </div>
  );
}

const Plane = ({ s = 22 }: { s?: number }) => (
  <Ic s={s}><circle cx="12" cy="12" r="12" fill="#2ba0da" /><path d="M4 12L19 5L16 19L11.500 15.500L9 18V14z" fill="#fff" /><path d="M9 14L16 8L11.500 15.500z" fill="#b8d6e8" /></Ic>
);

const Steam = ({ s = 22 }: { s?: number }) => (
  <Ic s={s}><circle cx="12" cy="12" r="12" fill="#15467f" /><path d="M1 13L10 17L16 9" stroke="#fff" strokeWidth="4" /><circle cx="16" cy="8.500" r="4" fill="#15467f" stroke="#fff" strokeWidth="1.600" /><circle cx="16" cy="8.500" r="1.800" fill="#fff" /><circle cx="8.500" cy="17" r="2.800" stroke="#fff" strokeWidth="1.300" fill="#15467f" /></Ic>
);

function Taskbar() {
  return (
    <div className="flex h-[40px] bg-[#101010] font-['Open_Sans','Noto_Sans',sans-serif] text-white">
      <Task><Ic s={17} h={17} vb="0 0 17 17"><path d="M0 2.500L7 1.500V8H0zM8 1.300L17 0V8H8zM0 9H7V15.500L0 14.500zM8 9H17V17L8 15.700z" fill="#fff" /></Ic></Task>
      <Task><Ic s={24}><rect x="1" y="3" width="14" height="13" rx="1" fill="#8d9499" /><rect x="6" y="2" width="17" height="14" rx="1" fill="#d7dcdf" /><rect x="8" y="4" width="13" height="10" fill="#e9f1fa" /><path d="M8 11L11 7L13 12L16 6L18 11L21 9" stroke="#3a7fc4" strokeWidth="1.400" /><path d="M4 16H16L19 21H7z" fill="#a4a9ad" /></Ic></Task>
      <div className="w-px" />
      <Task run><Ic s={23}><rect width="24" height="24" fill="#e8b0b0" /><rect x="2" y="2" width="20" height="20" fill="#a31c22" /><path d="M7.500 19.500V7H16.500V14.500H12" stroke="#f5d6d6" strokeWidth="3" /><rect x="17" y="18" width="3" height="3" fill="#f5d6d6" /></Ic></Task>
      <Task run><Ic s={24}><circle cx="12" cy="13" r="11" fill="#ff7139" /><path d="M16 2Q24 8 23 14Q20 22 12 22Q20 18 18 10z" fill="#ffd23e" /><path d="M3 5Q1 12 4 18Q2 10 9 7z" fill="#ff9640" /><circle cx="12" cy="12.500" r="5.500" fill="#7548c8" /><path d="M7 12Q9 8 13 11L9 14z" fill="#ff6a4d" /></Ic></Task>
      <Task run><Ic s={24}><path d="M1 4H9L11 6H23V21H1z" fill="#e9b54a" /><path d="M1 8H23V21H1z" fill="#fbd77a" /><path d="M6 21V13H18V21H14V17H10V21z" fill="#3f9ad6" /></Ic></Task>
      <Task><Ic s={24}><circle cx="12" cy="12" r="9.500" stroke="#9a1fd6" strokeWidth="3.800" /></Ic></Task>
      <Task run><Ic s={22}><path d="M4 1H20Q22 1 22 3V23L17 19H4Q2 19 2 17V3Q2 1 4 1z" fill="#6a7cc6" /><path d="M6 14Q6 8 9 6.500H15Q18 8 18 14L15 15L14 14H10L9 15z" fill="#fff" /><circle cx="9.700" cy="11" r="1.400" fill="#6a7cc6" /><circle cx="14.300" cy="11" r="1.400" fill="#6a7cc6" /></Ic></Task>
      <Task run><Ic s={24}><path d="M2 2H20V23H2z" fill="#eef2e6" /><rect x="3" y="9" width="16" height="12" fill="#6cc03a" /><path d="M5 9V17M8 9V12M11 12H14" stroke="#24341a" strokeWidth="1.800" /><path d="M14 16L23 3" stroke="#d9b04a" strokeWidth="3" /></Ic></Task>
      <Task run><Ic s={24}><path d="M2 18Q6 3 11 3Q16 4 22 21" stroke="#4c8a32" strokeWidth="4.500" /><path d="M3 18Q7 10 8 20z" fill="#b6dba0" /></Ic></Task>
      <Task run><Steam /></Task>
      <Task run>
        <div className="flex h-[20px] w-[21px] items-center justify-center border border-[#8fb6ea] bg-[#070a4a] font-['Open_Sans',sans-serif] text-[11px] font-semibold text-[#9cc4f5]">Ps</div>
      </Task>
      <Task on><AppMark s={23} /></Task>
      <Task run><Plane /></Task>
      <Task run><Plane /></Task>
      <Task run>
        <div className="flex h-[21px] w-[21px] items-center justify-center rounded-[1px] bg-[#2a8fe6] pb-[5px] text-[20px] leading-none font-bold text-white">g</div>
      </Task>
      <div className="ml-auto flex items-center">
        <div className="flex items-center gap-[8px] pt-px">
          <Plane s={16} />
          <Steam s={16} />
          <Ic s={16}><circle cx="12" cy="12" r="10" fill="#14231d" stroke="#35584a" strokeWidth="1.500" /><path d="M7 17L16 7" stroke="#35584a" /></Ic>
          <Plane s={16} />
          <Ic s={16}><rect width="24" height="24" fill="#313131" /><path d="M4 22V8L14 3L21 10L12 12V19H20" stroke="#76b900" strokeWidth="3" /></Ic>
          <Ic s={16}><path d="M7 8H15V20Q11 24 7 20zM9 2H14V8H9z" stroke="#f0f0f0" strokeWidth="1.800" /><path d="M13 18L16 21L22 14" stroke="#f0f0f0" strokeWidth="1.800" /></Ic>
          <Ic s={16}><rect x="5" y="4" width="18" height="13" stroke="#f0f0f0" strokeWidth="1.800" /><path d="M14 17V22M9 22H19M1 2H7V8H1zM4 8V22" stroke="#f0f0f0" strokeWidth="1.600" /></Ic>
          <Ic s={16}><rect x="7" y="1" width="10" height="14" rx="3" fill="#fff" /><path d="M5 17H19M12 17V23M8 22H16" stroke="#fff" strokeWidth="2.500" /></Ic>
          <Ic s={16}><path d="M1 9H5L11 4V20L5 15H1zM14 8Q16 12 14 16M17 6Q21 12 17 18M20 3Q26 12 20 21" stroke="#f0f0f0" strokeWidth="1.700" /></Ic>
        </div>
        <div className="ml-[5px] flex w-[84px] flex-col items-center text-[12px] leading-[18px] tracking-[-0.6px] whitespace-nowrap">
          <span>5:27 PM</span>
          <span>Tue 2020 05 26</span>
        </div>
        <div className="ml-[13px]"><Ic s={17}><path d="M2 2H22V18H14L10 22V18H2z" fill="#fff" /><path d="M5 6.500H19M5 10H19M5 13.500H14" stroke="#101010" strokeWidth="1.500" /><circle cx="19" cy="19" r="4" fill="#fff" stroke="#101010" /></Ic></div>
        <div className="mr-[4px] ml-[18px] h-[40px] w-px bg-[#555]" />
      </div>
    </div>
  );
}

export default function App() {
  return (
    <div className="flex h-[1080px] w-[2560px] flex-col overflow-hidden bg-[#444444] font-['DejaVu_Sans_Condensed','Noto_Sans',sans-serif] leading-[1.3]">
      <TitleBar />
      <MenuBar />
      <Toolbar />
      <div className="flex h-[853px] shrink-0">
        <SceneExplorer />
        <Viewport />
        <CommandPanel />
      </div>
      <TimeSlider />
      <StatusBar />
      <Taskbar />
    </div>
  );
}
